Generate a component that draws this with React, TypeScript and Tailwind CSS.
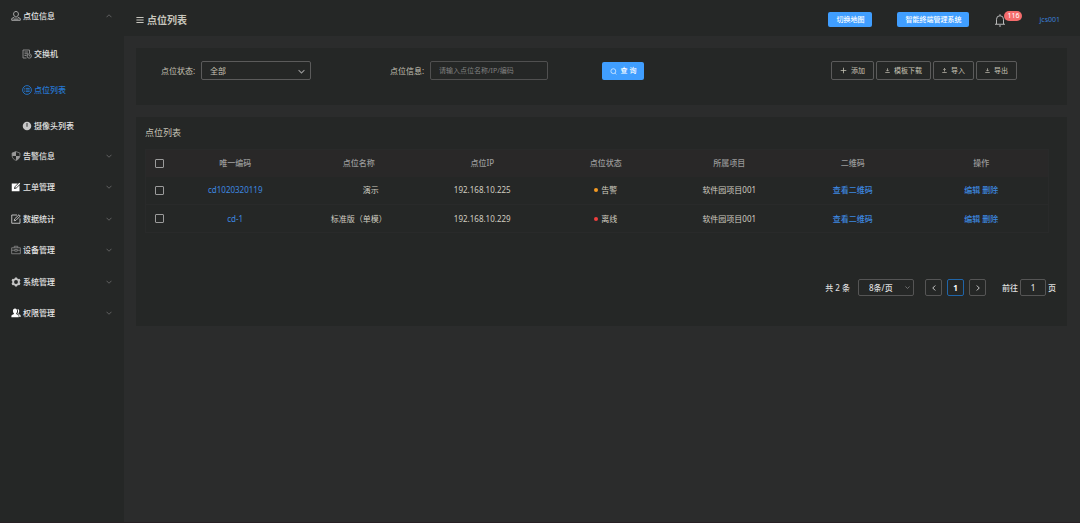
import React from "react";

type IconProps = { className?: string };

const Svg = ({ className, children, box = "0 0 20 20" }: IconProps & { children: React.ReactNode; box?: string }) => (
  <svg viewBox={box} className={className} fill="none" stroke="currentColor" strokeWidth={1.8} aria-hidden="true">
    {children}
  </svg>
);

const PersonIcon = (p: IconProps) => (
  <Svg {...p}>
    <path d="M10 1c3 0 4.800 2 4.800 4.800 0 2.900-1.800 6.200-4.800 6.200S5.200 8.700 5.200 5.800C5.200 3 7 1 10 1Z" strokeWidth={2} />
    <path d="M6.500 12.500 1.500 15v3.600h17V15l-5-2.500M5 16.200h10" strokeWidth={2} />
  </Svg>
);
const SwitchIcon = (p: IconProps) => (
  <Svg {...p}>
    <path d="M9 18H2V2h13v7M5 6h7M5 9.5h7M5 13h4" />
    <circle cx="14.5" cy="14" r="4.3" />
    <path d="M14.5 11.5V14h2" />
  </Svg>
);
const ListCircleIcon = (p: IconProps) => (
  <Svg {...p}>
    <circle cx="10" cy="10" r="8.8" />
    <path d="M4.5 6.8h1.4M7.4 6.8h8M4.5 10h1.4M7.4 10h8M4.5 13.2h1.4M7.4 13.2h8" />
  </Svg>
);
const CameraIcon = (p: IconProps) => (
  <Svg {...p}>
    <circle cx="10" cy="10" r="8.5" fill="currentColor" stroke="none" />
    <path d="M10 4v7.5" stroke="#252726" />
  </Svg>
);
const ShieldIcon = (p: IconProps) => (
  <Svg {...p}>
    <path d="M10 1.2 2.2 4v5.2c0 4.6 3.2 8 7.8 9.600 4.600-1.600 7.800-5 7.800-9.600V4Z" strokeWidth={1.4} />
    <path d="M10 1.200V10H2.200V4ZM10 10h7.700c-.4 4.200-3.400 7.200-7.700 8.800Z" fill="currentColor" stroke="none" />
  </Svg>
);
const FilledEditIcon = (p: IconProps) => (
  <Svg {...p}>
    <path d="M1.500 3h12L7 9.500 6 14l4.500-1 6.500-6.500V18.500H1.500Z" fill="currentColor" stroke="none" />
    <path d="m9 11 8.500-8.500" strokeWidth={2.4} />
  </Svg>
);
const EditIcon = (p: IconProps) => (
  <Svg {...p}>
    <path d="M12 2H1.500v16.500H18V9" />
    <path d="m6.500 13.500.8-3.600L16 1.500l2.500 2.500-8.600 8.700Z" />
  </Svg>
);
const BriefcaseIcon = (p: IconProps) => (
  <Svg {...p}>
    <path d="M1.300 5.500h17.400v12H1.300ZM6.500 5.500V2.500h7v3M1.300 10.500h6M12.700 10.500h6M7.500 8.800h5v3.600h-5Z" strokeWidth={1.600} />
  </Svg>
);
const GearIcon = (p: IconProps) => (
  <Svg {...p}>
    <circle cx="10" cy="10" r="5.800" strokeWidth={3.800} />
    <path d="M10 .8v3M10 16.200v3M2 5.400l2.600 1.500M15.400 13.100l2.600 1.500M2 14.600l2.600-1.500M15.400 6.900 18 5.400" strokeWidth={4.200} />
  </Svg>
);
const UsersIcon = (p: IconProps) => (
  <Svg {...p}>
    <g fill="currentColor" stroke="none">
      <path d="M8 1.200c2.800 0 4.200 2 4.200 4.800 0 2.200-.8 3.800-1.900 4.900v1.300l4 2c.8.400 1.100 1.200 1.100 2.200v2.100H.8v-2.100c0-1 .3-1.800 1.100-2.200l4-2v-1.300C4.700 9.800 3.800 8.200 3.800 6c0-2.800 1.500-4.800 4.200-4.800Z" />
      <path d="M12.800 2c2.400 0 3.700 1.800 3.700 4.200 0 2-.7 3.400-1.700 4.300v1.300l3.300 1.700c.8.400 1.100 1 1.100 2v2.300h-2.500c0-3-.4-4.300-1.800-5l-2.300-1.200c1.800-2.600 2-6.600.2-9.600Z" />
    </g>
  </Svg>
);
const Chevron = ({ className }: IconProps) => (
  <Svg className={className} box="0 0 12 12">
    <path d="m1 3.500 5 5 5-5" />
  </Svg>
);
const MenuIcon = (p: IconProps) => (
  <Svg {...p}>
    <path d="M1 4h18M1 10h18M1 16h18" strokeWidth={2.600} />
  </Svg>
);
const BellIcon = (p: IconProps) => (
  <Svg {...p} box="0 0 24 28">
    <path d="M2 22.500h20M5 22V12.500a7 7 0 0 1 14 0V22M12 5.500V2.500M10 26h4" strokeWidth={2} />
  </Svg>
);
const SearchIcon = (p: IconProps) => (
  <Svg {...p}>
    <circle cx="9.500" cy="9" r="7" />
    <path d="m14 14.500 4 4" />
  </Svg>
);
const PlusIcon = (p: IconProps) => (
  <Svg {...p}>
    <path d="M10 2v16M2 10h16" strokeWidth={2.200} />
  </Svg>
);
const DownIcon = (p: IconProps) => (
  <Svg {...p}>
    <path d="M10 1v11M5 7.500l5 5 5-5M1 18h18" strokeWidth={2.800} />
  </Svg>
);
const UpIcon = (p: IconProps) => (
  <Svg {...p}>
    <path d="M10 14V2M5 7l5-5 5 5M1 18h18" strokeWidth={2.800} />
  </Svg>
);

const children = [
  { label: "交换机", Icon: SwitchIcon, text: "text-[#e4e4e4]", icon: "text-[#929292]" },
  { label: "点位列表", Icon: ListCircleIcon, text: "text-[#2578d2]", icon: "text-[#2578d2]" },
  { label: "摄像头列表", Icon: CameraIcon, text: "text-[#e4e4e4]", icon: "text-[#c8c8c8]" },
];

const groups = [
  { label: "告警信息", Icon: ShieldIcon, icon: "text-[#999999]" },
  { label: "工单管理", Icon: FilledEditIcon, icon: "text-white" },
  { label: "数据统计", Icon: EditIcon, icon: "text-[#cccccc]" },
  { label: "设备管理", Icon: BriefcaseIcon, icon: "text-[#8c8c8c]" },
  { label: "系统管理", Icon: GearIcon, icon: "text-[#c4c4c4]" },
  { label: "权限管理", Icon: UsersIcon, icon: "text-white" },
];

const rows = [
  { code: "cd1020320119", name: "演示", indent: "pl-6", ip: "192.168.10.225", status: "告警", dot: "bg-[#f59a23]", project: "软件园项目001" },
  { code: "cd-1", name: "标准版（单模）", indent: "", ip: "192.168.10.229", status: "离线", dot: "bg-[#f03e3e]", project: "软件园项目001" },
];

const actions = [
  { label: "添加", Icon: PlusIcon, size: "size-[7px]" },
  { label: "模板下载", Icon: DownIcon, size: "size-[5px]" },
  { label: "导入", Icon: UpIcon, size: "size-[5px]" },
  { label: "导出", Icon: DownIcon, size: "size-[5px]" },
];

const columns = ["唯一编码", "点位名称", "点位IP", "点位状态", "所属项目", "二维码"];

const Tick = ({ label }: { label: string }) => (
  <input
    type="checkbox"
    aria-label={label}
    className="mx-auto block size-[9px] appearance-none rounded-[1px] border border-[#9b9b9b] checked:bg-[#409eff]"
  />
);

function Sidebar() {
  return (
    <nav className="w-[124px] shrink-0 bg-[#252726] font-medium text-[#e4e4e4]">
      <button className="flex h-8 w-full items-center pr-3 pl-[11px]">
        <PersonIcon className="mr-0.5 size-[10px] text-[#a8a8a8]" />
        点位信息
        <Chevron className="ml-auto size-[6px] rotate-180 text-[#666666]" />
      </button>
      <ul className="pt-1">
        {children.map(({ label, Icon, text, icon }) => (
          <li key={label}>
            <a href="#" className={`flex h-9 items-center pl-[22px] ${text}`}>
              <Icon className={`mr-0.5 size-[10px] ${icon}`} />
              {label}
            </a>
          </li>
        ))}
      </ul>
      <ul className="-mt-1 grid h-[189px] auto-rows-fr">
        {groups.map(({ label, Icon, icon }) => (
          <li key={label} className="flex">
            <button className="flex w-full items-center pr-3 pl-[11px]">
              <Icon className={`mr-0.5 size-[10px] ${icon}`} />
              {label}
              <Chevron className="ml-auto size-[6px] text-[#666666]" />
            </button>
          </li>
        ))}
      </ul>
    </nav>
  );
}

function Header() {
  return (
    <header className="flex h-9 items-center bg-[#252726] pt-[3px] pr-5 pl-3 text-[7px]">
      <MenuIcon className="mr-[3px] size-2 text-[#c8c6bd]" />
      <h1 className="text-[10px] font-bold text-[#c8c6bd]">点位列表</h1>
      <button className="ml-auto h-[15px] rounded-[2px] bg-[#409eff] px-2 font-medium text-white">切换地图</button>
      <button className="ml-[25px] h-[15px] rounded-[2px] bg-[#409eff] px-2 font-medium text-white">智能终端管理系统</button>
      <button aria-label="消息" className="relative mr-[33px] ml-[25px]">
        <BellIcon className="h-[14px] w-3 text-[#b8b8b8]" />
        <span className="absolute -top-0.5 left-[10px] rounded-full bg-[#f56c6c] px-[3px] leading-[10px] text-white">116</span>
      </button>
      <a href="#" className="text-[#3b7fd9]">jcs001</a>
    </header>
  );
}

function Filters() {
  return (
    <section className="flex h-[57px] items-start bg-[#252726] pt-[13px] pr-[50px] pl-[25px] text-[#c5c2b5]">
      <label htmlFor="status" className="w-10 shrink-0 leading-[19px]">点位状态:</label>
      <div className="relative mr-[79px]">
        <select id="status" className="block h-[19px] w-[110px] appearance-none rounded-[2px] border border-[#5b5b5b] bg-transparent px-2">
          <option>全部</option>
        </select>
        <Chevron className="pointer-events-none absolute top-[7px] right-1.5 size-[7px] text-[#999999]" />
      </div>
      <label htmlFor="info" className="w-10 shrink-0 leading-[19px]">点位信息:</label>
      <input
        id="info"
        placeholder="请输入点位名称/IP/编码"
        className="h-[19px] w-[118px] min-w-0 rounded-[2px] border border-[#505050] bg-transparent px-2 text-[7px] placeholder:text-[#808080]"
      />
      <button className="mt-px ml-[54px] flex h-[18px] w-[42px] shrink-0 items-center justify-center gap-1 rounded-[2px] bg-[#409eff] text-[7px] font-medium text-white">
        <SearchIcon className="size-[7px]" />
        查 询
      </button>
      <div className="ml-auto flex shrink-0 gap-0.5 text-[7px]">
        {actions.map(({ label, Icon, size }) => (
          <button key={label} className="flex h-[19px] items-center gap-1 rounded-[2px] border border-[#5b5b5b] px-2">
            <Icon className={size} />
            {label}
          </button>
        ))}
      </div>
    </section>
  );
}

function Pagination() {
  const box = "h-[17px] rounded-[2px] border border-[#555555]";
  return (
    <div className="mt-[46px] flex items-center justify-end pr-[11px] font-medium text-[#dddddd]">
      <span className="mr-2">共 2 条</span>
      <div className="relative mr-[11px]">
        <select aria-label="每页条数" className={`${box} block w-14 appearance-none bg-transparent pl-2.5`}>
          <option>8条/页</option>
        </select>
        <Chevron className="pointer-events-none absolute top-[6px] right-1 size-[5px] text-[#888888]" />
      </div>
      <div className="mr-4 flex gap-[5px]">
        <button aria-label="上一页" className={`${box} flex w-[17px] items-center justify-center`}>
          <Chevron className="size-[6px] rotate-90" />
        </button>
        <button className="h-[17px] w-[17px] rounded-[2px] border border-[#2065a8] font-bold text-white">1</button>
        <button aria-label="下一页" className={`${box} flex w-[17px] items-center justify-center`}>
          <Chevron className="size-[6px] -rotate-90" />
        </button>
      </div>
      <label htmlFor="page">前往</label>
      <input id="page" defaultValue="1" className={`${box} mx-0.5 w-[26px] bg-transparent text-center`} />
      <span>页</span>
    </div>
  );
}

export default function App() {
  return (
    <div className="flex min-h-screen border-b border-[#272024] bg-[#2b2c2c] font-['Noto_Sans','Noto_Sans_CJK_SC',sans-serif] text-[8px] leading-3">
      <Sidebar />
      <div className="min-w-0 flex-1">
        <Header />
        <main className="space-y-3 py-3 pr-[13px] pl-3">
          <Filters />
          <section className="bg-[#252726] pt-2.5 pb-[30px]">
            <h2 className="pl-[9px] text-[9px] text-[#c5c2b5]">点位列表</h2>
            <div className="mt-2.5 mr-[18px] ml-[9px]">
              <table className="w-full table-fixed border border-[#292a2a] text-center text-[#d0cdc0]">
                <thead className="bg-[#292828] text-[#9a9a9a]">
                  <tr className="h-[27px]">
                    <th className="w-7"><Tick label="全选" /></th>
                    {columns.map((c) => (
                      <th key={c} className="font-medium">{c}</th>
                    ))}
                    <th className="w-[134px] font-medium">操作</th>
                  </tr>
                </thead>
                <tbody>
                  {rows.map((r) => (
                    <tr key={r.code} className="h-7 border-b border-[#292a2a]">
                      <td><Tick label={r.code} /></td>
                      <td><a href="#" className="text-[#3d87e0]">{r.code}</a></td>
                      <td className={r.indent}>{r.name}</td>
                      <td>{r.ip}</td>
                      <td>
                        <span className="flex items-center justify-center gap-[3px]">
                          <i className={`size-1 rounded-full ${r.dot}`} />
                          {r.status}
                        </span>
                      </td>
                      <td>{r.project}</td>
                      <td><a href="#" className="font-medium text-[#3d87e0]">查看二维码</a></td>
                      <td className="font-medium text-[#3d87e0]">
                        <a href="#">编辑</a> <a href="#">删除</a>
                      </td>
                    </tr>
                  ))}
                </tbody>
              </table>
            </div>
            <Pagination />
          </section>
        </main>
      </div>
    </div>
  );
}
